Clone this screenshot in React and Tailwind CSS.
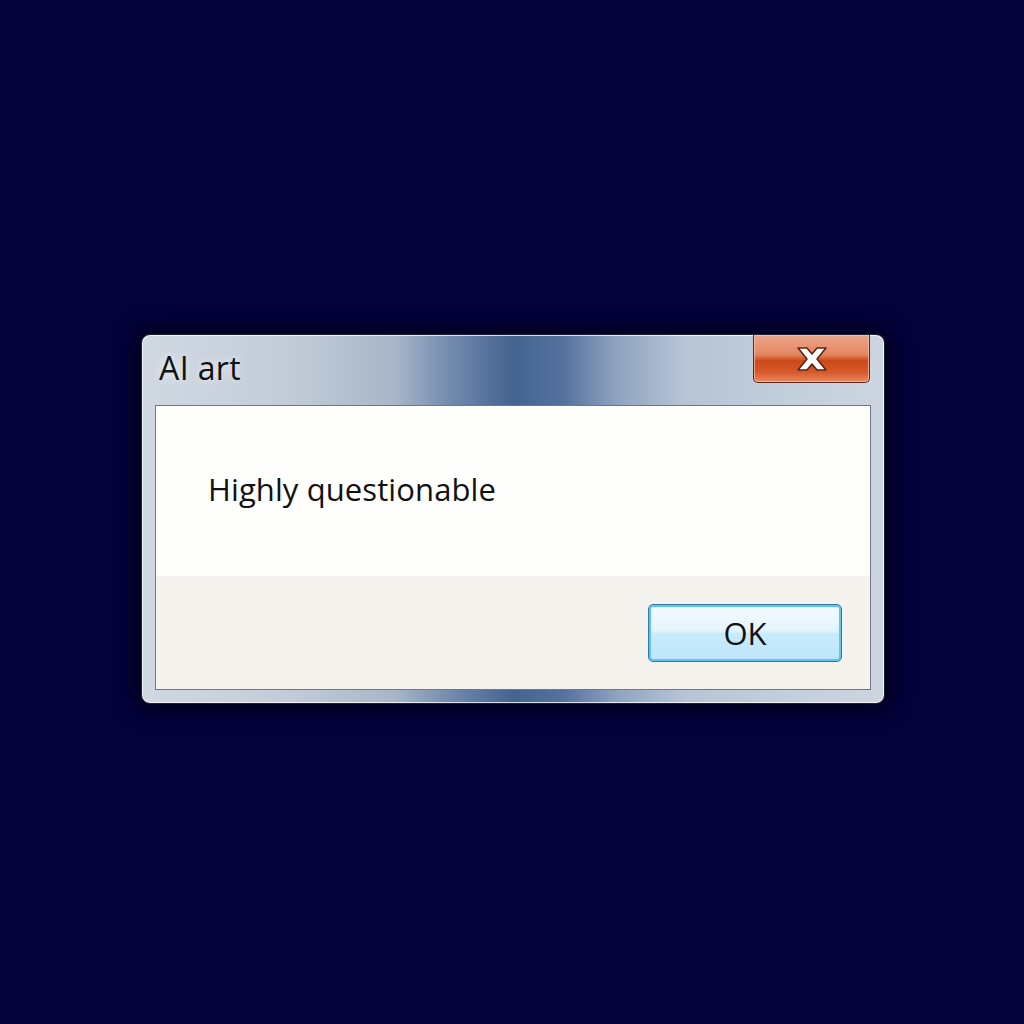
import React from 'react';

function CloseGlyph() {
    return (
        <svg width="34" height="26" viewBox="0 0 34 26">
            <path
                d="M3 2h9l5 6 5-6h9l-9 11 9 11h-9l-5-6-5 6H3l9-11z"
                fill="#ffffff"
                stroke="#5a2414"
                strokeWidth="1.6"
                strokeLinejoin="round"
            />
        </svg>
    );
}

export default function App() {
    return (
        <div
            className="min-h-[1024px] w-full bg-[#04013b] pl-[141px] pt-[334px]"
            style={{ fontFamily: '"Open Sans", "Noto Sans", sans-serif' }}
        >
            {/* Window */}
            <div className="relative w-[744px] h-[370px] rounded-[9px] border border-[#1c2234] bg-[linear-gradient(to_right,#d0d8e2_0%,#c2ccd8_20%,#a8b6c8_34%,#7088ad_42%,#44638f_50%,#56739f_57%,#8fa3c0_64%,#b6c4d5_73%,#c4cfdc_88%,#ccd5e0_100%)] shadow-[0_0_18px_6px_rgba(0,0,0,0.55),inset_0_0_0_1px_rgba(255,255,255,0.75)] flex flex-col">
                {/* Title bar */}
                <div className="h-[70px] flex justify-between">
                    <div className="pl-[17px] pt-[12px] text-[32px] leading-[42px] text-[#111] tracking-[0.4px] [text-shadow:0_0_8px_rgba(255,255,255,0.9)]">
                        AI art
                    </div>
                    <div className="mr-[14px] w-[117px] h-[48px] rounded-b-[5px] border border-t-0 border-[#5b2a1e] bg-[linear-gradient(to_bottom,#eca68c_0%,#e4865f_42%,#cc4818_55%,#d85a2c_80%,#e98a63_100%)] shadow-[inset_0_0_0_1px_rgba(255,210,190,0.6)] flex items-center justify-center">
                        <CloseGlyph />
                    </div>
                </div>

                {/* Client area */}
                <div className="mx-[13px] mb-[13px] flex-1 border border-[#6d7886] flex flex-col overflow-hidden">
                    <div className="h-[170px] bg-[#fefefc] pl-[52px] pt-[63px]">
                        <div className="text-[31px] leading-[40px] text-[#111] tracking-[0.1px]">
                            Highly questionable
                        </div>
                    </div>
                    <div className="flex-1 bg-[#f5f3ee] flex justify-end items-start pt-[28px] pr-[28px]">
                        <div className="w-[194px] h-[58px] rounded-[5px] border border-[#3a74a6] shadow-[inset_0_0_0_2px_#5cc6f2] bg-[linear-gradient(to_bottom,#f4fbfe_0%,#e4f5fd_45%,#c8ebfc_52%,#bde5fb_100%)] flex items-center justify-center text-[31px] text-[#111]">
                            OK
                        </div>
                    </div>
                </div>
            </div>
        </div>
    );
}
